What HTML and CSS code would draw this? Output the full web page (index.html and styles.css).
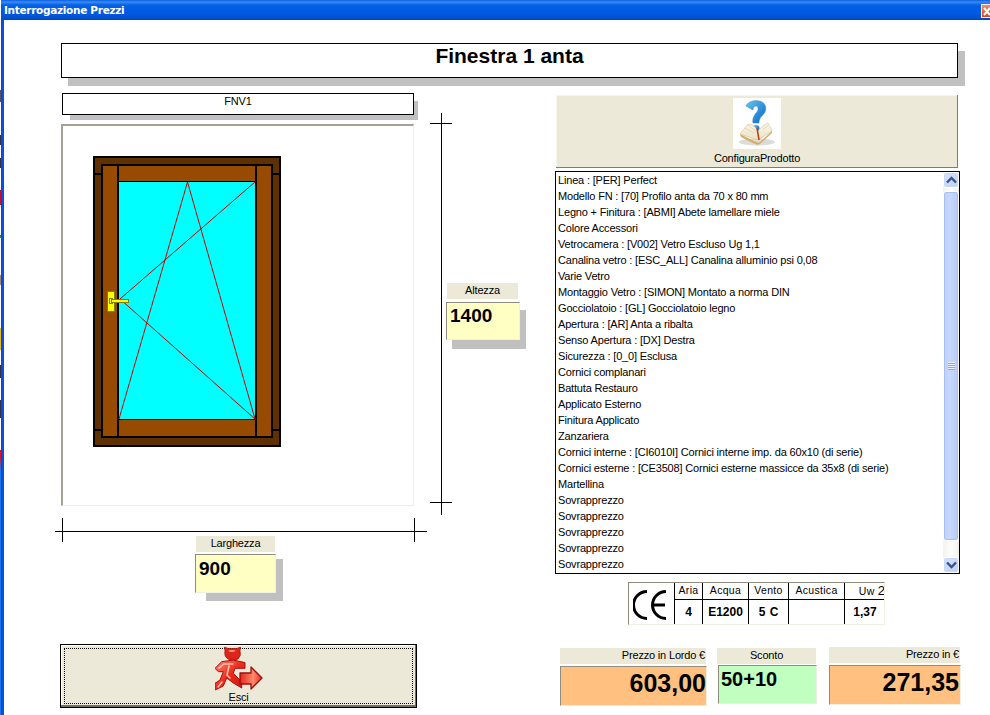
FILE: index.html
```html
<!DOCTYPE html>
<html lang="it">
<head>
<meta charset="utf-8">
<title>Interrogazione Prezzi</title>
<link rel="stylesheet" href="styles.css">
</head>
<body>
<div class="window">
  <header class="titlebar">
    <span class="title-text">Interrogazione Prezzi</span>
    <span class="close-btn"><svg width="8" height="13" viewBox="0 0 8 13"><path d="M2 3l6 7M8 3l-6 7" stroke="#fff" stroke-width="2" fill="none"/></svg></span>
  </header>
  <div class="frame">
    <div class="desktop-strip"></div>
    <div class="win-border"></div>
    <main class="client">
      <h1 class="heading">Finestra 1 anta</h1>
      <div class="columns">
        <section class="left">
          <div class="drawing-row">
            <div class="drawing-col">
              <div class="code-box">FNV1</div>
              <div class="sunken drawing">
                <svg width="350" height="379" viewBox="63 126 350 379" shape-rendering="crispEdges">
                  <rect x="94" y="157" width="186" height="289" fill="#5f3000" stroke="#000" stroke-width="2"/>
                  <path d="M93 174h8M273 174h8M93 430h8M273 430h8" stroke="#000" stroke-width="1.5"/>
                  <rect x="102" y="165" width="170" height="272" fill="#964b00" stroke="#000" stroke-width="2"/>
                  <rect x="118.5" y="181.500" width="137" height="238" fill="#00ffff" stroke="#000" stroke-width="1.500"/>
                  <path d="M118 165v272M256 165v272" stroke="#000" stroke-width="1.500"/>
                  <g class="sash-lines" stroke="#c00000" stroke-width="1" fill="none">
                    <path d="M187.500 182L119 419M187.500 182L255 419"/>
                    <path d="M255 182L120 299L255 419"/>
                  </g>
                  <rect x="107" y="291" width="7" height="20" fill="#ffff00" stroke="#808000"/>
                  <rect x="109" y="298" width="3" height="5" fill="#ffff00" stroke="#808000"/>
                  <rect x="111" y="299" width="17" height="3" fill="#ffff00" stroke="#808000"/>
                </svg>
              </div>
            </div>
            <svg class="dim-v" width="22" height="402" viewBox="0 0 22 402" shape-rendering="crispEdges">
              <path d="M11.500 0V402M0 10.500H22M0 389.500H22" stroke="#000" fill="none"/>
            </svg>
            <div class="field field-h">
              <div class="field-label">Altezza</div>
              <div class="sunken value-box value-yellow">1400</div>
            </div>
          </div>
          <svg class="dim-h" width="372" height="24" viewBox="0 0 372 24" shape-rendering="crispEdges">
            <path d="M0 13.500H372M7.500 0V24M359.500 0V24" stroke="#000" fill="none"/>
          </svg>
          <div class="field field-w">
            <div class="field-label">Larghezza</div>
            <div class="sunken value-box value-yellow">900</div>
          </div>
          <button class="exit-btn" type="button">
            <span class="focus-ring">
              <svg width="48" height="44" viewBox="0 0 48 44">
                <defs>
                  <linearGradient id="red" x1="0" y1="0" x2="1" y2="1">
                    <stop offset="0" stop-color="#ff8a78"/><stop offset=".5" stop-color="#ee2a1a"/><stop offset="1" stop-color="#c2150e"/>
                  </linearGradient>
                  <linearGradient id="arrow" x1="0" y1="0" x2="1" y2="0">
                    <stop offset="0" stop-color="#e82418"/><stop offset=".6" stop-color="#ff8a70"/><stop offset="1" stop-color="#e83020"/>
                  </linearGradient>
                </defs>
                <path d="M10 4L9.500 0 13 1.500h9L25.500 0 25 4a7.500 7.500 0 0 1-2 8q-5 3-10 0a7.500 7.500 0 0 1-3-8z" fill="#dd2418" stroke="#9c0f0c" stroke-width=".7"/>
                <path d="M13 4q4-2 8 0-4 2-8 0z" fill="#ff9c8a"/>
                <path d="M0 21.300L6.700 14.700 18.300 13 30 15.600V21.300H20L18.300 26.300 26.700 34.700V41L18.300 36 11.700 31 8.300 39 0 43V36.300L5 33 8.300 24.700 3.300 24.700z" fill="url(#red)" stroke="#a81210" stroke-linejoin="round"/>
                <path d="M4 21L9 17H18M14 19L12 28 15 31 M3 40L7 35" fill="none" stroke="#ffc0b0" stroke-width="1.600" stroke-linecap="round"/>
                <path d="M25 26H36V20L47 31 36 42V37H25z" fill="url(#arrow)" stroke="#98100c" stroke-width="1.300" stroke-linejoin="round"/>
              </svg>
              <span class="exit-label">Esci</span>
            </span>
          </button>
        </section>
        <section class="right">
          <button class="config-btn" type="button">
            <span class="config-icon">
              <svg width="48" height="51" viewBox="0 0 48 51">
                <defs>
                  <linearGradient id="q" x1="0" y1="0" x2="1" y2="1"><stop offset="0" stop-color="#62c8f6"/><stop offset="1" stop-color="#0a64c0"/></linearGradient>
                  <linearGradient id="pg" x1="0" y1="0" x2="0" y2="1"><stop offset="0" stop-color="#fbf6ea"/><stop offset="1" stop-color="#efe2c4"/></linearGradient>
                </defs>
                <ellipse cx="24" cy="44" rx="18" ry="3.500" fill="#dcdcdc"/>
                <path d="M13 8C15 3 22 2 26 3 32 4 34 9 32 14 30 18 26 19 26 25H20C19 20 22 16 24 14 26 11 25 8 23 8 21 8 20 10 20 12z" fill="url(#q)" stroke="#2a80cc" stroke-width=".5"/>
                <ellipse cx="23" cy="30" rx="3.500" ry="3" fill="url(#q)"/>
                <path d="M7 36L15 26C19 26 23 29 25 33 28 29 31 27 35 25L39 33 25 42z" fill="url(#pg)" stroke="#c8b080" stroke-width=".5"/>
                <path d="M7 36L23 44C25 45 26 45 27 44L39 33V35L27 46C25 47 24 47 22 46L8 39z" fill="#d8ac62"/>
                <path d="M24 30L26 42" stroke="#b8481c" stroke-width="1.600"/>
                <path d="M12 30L21 35M15 27L23 33M30 31L35 28" stroke="#d9c9a6" stroke-width=".6"/>
              </svg>
            </span>
            <span class="config-label">ConfiguraProdotto</span>
          </button>
          <div class="listbox">
            <ul class="list-items">
              <li>Linea : [PER] Perfect</li>
              <li>Modello FN : [70] Profilo anta da 70 x 80 mm</li>
              <li>Legno + Finitura : [ABMI] Abete lamellare miele</li>
              <li>Colore Accessori</li>
              <li>Vetrocamera : [V002] Vetro Escluso Ug 1,1</li>
              <li>Canalina vetro : [ESC_ALL] Canalina alluminio psi 0,08</li>
              <li>Varie Vetro</li>
              <li>Montaggio Vetro : [SIMON] Montato a norma DIN</li>
              <li>Gocciolatoio : [GL] Gocciolatoio legno</li>
              <li>Apertura : [AR] Anta a ribalta</li>
              <li>Senso Apertura : [DX] Destra</li>
              <li>Sicurezza : [0_0] Esclusa</li>
              <li>Cornici complanari</li>
              <li>Battuta Restauro</li>
              <li>Applicato Esterno</li>
              <li>Finitura Applicato</li>
              <li>Zanzariera</li>
              <li>Cornici interne : [CI6010I] Cornici interne imp. da 60x10 (di serie)</li>
              <li>Cornici esterne : [CE3508] Cornici esterne massicce da 35x8 (di serie)</li>
              <li>Martellina</li>
              <li>Sovrapprezzo</li>
              <li>Sovrapprezzo</li>
              <li>Sovrapprezzo</li>
              <li>Sovrapprezzo</li>
              <li>Sovrapprezzo</li>
            </ul>
            <div class="scrollbar">
              <span class="sb-btn"><svg width="11" height="8" viewBox="0 0 11 8"><path d="M1 6.500l4.500-4.500L10 6.500" fill="none" stroke="#3a5488" stroke-width="2.400"/></svg></span>
              <span class="sb-thumb"><span class="sb-grip"></span></span>
              <span class="sb-btn"><svg width="11" height="8" viewBox="0 0 11 8"><path d="M1 1.500l4.500 4.500L10 1.500" fill="none" stroke="#3a5488" stroke-width="2.400"/></svg></span>
            </div>
          </div>
          <div class="sunken cert">
            <div class="ce-mark">
              <svg width="38" height="32" viewBox="0 0 38 32"><path d="M14 2.500a13.500 13.500 0 0 0 0 27M33 2.500a13.500 13.500 0 0 0 0 27M20 16H32" fill="none" stroke="#000" stroke-width="3"/></svg>
            </div>
            <div class="cert-h h-aria">Aria</div>
            <div class="cert-h h-acqua">Acqua</div>
            <div class="cert-h h-vento">Vento</div>
            <div class="cert-h h-acu">Acustica</div>
            <div class="cert-h h-uw">Uw <span class="uw-two">2</span></div>
            <div class="cert-v">4</div>
            <div class="cert-v">E1200</div>
            <div class="cert-v">5 C</div>
            <div class="cert-v"></div>
            <div class="cert-v">1,37</div>
          </div>
          <div class="prices">
            <div class="price price-gross">
              <div class="field-label align-end">Prezzo in Lordo €</div>
              <div class="sunken amount value-orange">603,00</div>
            </div>
            <div class="price price-disc">
              <div class="field-label">Sconto</div>
              <div class="sunken disc value-green">50+10</div>
            </div>
            <div class="price price-net">
              <div class="field-label align-end">Prezzo in €</div>
              <div class="sunken amount value-orange">271,35</div>
            </div>
          </div>
        </section>
      </div>
    </main>
  </div>
</div>
</body>
</html>
```

FILE: styles.css
```css
* { box-sizing: border-box; }
html, body { margin: 0; padding: 0; }
body {
  width: 990px; height: 715px; overflow: hidden; background: #fff;
  font-family: "Liberation Sans", Arial, sans-serif; font-size: 11px; letter-spacing: -.18px; color: #000;
}
.window { width: 990px; height: 715px; display: flex; flex-direction: column; overflow: hidden; }

.titlebar {
  height: 20px; flex: none; margin-left: 1px; display: flex; align-items: flex-start; justify-content: space-between;
  background: linear-gradient(#0a5ee0 0, #3a8cf2 2px, #0461e6 5px, #0058e0 14px, #0050cc 18px, #0046b8 20px);
}
.title-text { padding: 3px 0 0 3px; color: #fff; font-family: "DejaVu Sans", sans-serif; font-size: 10.5px; line-height: 14px; font-weight: bold; letter-spacing: -.3px; }
.close-btn {
  width: 9px; height: 14px; margin-top: 4px; display: block;
  background: linear-gradient(#ea9070, #d4471f); border: 1px solid #f4f4f4; border-right: 0; overflow: hidden;
}
.close-btn svg { display: block; }

.frame { flex: 1; display: flex; min-height: 0; }
.desktop-strip {
  width: 1px; flex: none;
  background: linear-gradient(#fff 0 70px, #555 70px 82px, #fff 82px 115px, #334 115px 125px, #fff 125px 138px, #334 138px 148px, #fff 148px 170px, #c01030 170px 185px, #fff 185px 215px, #18a028 215px 218px, #fff 218px 255px, #a08870 255px 265px, #fff 265px 308px, #e8b820 308px 330px, #fff 330px 345px, #334 345px 358px, #fff 358px 380px, #334 380px 398px, #fff 398px 430px, #e01020 430px 436px, #1e78e8 450px 690px);
}
.win-border { width: 3px; flex: none; background: linear-gradient(90deg, #0a3fd0, #0a55e8 60%, #0a45d8); }
.client { flex: 1; min-width: 0; padding: 23px 0 0 57px; position: relative; isolation: isolate; }

.heading {
  position: relative; width: 897px; height: 35px; margin: 0; border: 1px solid #000; background: #fff;
  font-size: 21px; line-height: 24px; font-weight: bold; letter-spacing: 0; text-align: center;
}
.heading::before { content: ""; position: absolute; z-index: -1; left: 6px; top: 7px; right: -8px; bottom: -9px; background: #c0c0c0; }

.columns { display: flex; margin-top: 15px; margin-left: -6px; }
.left { width: 500px; flex: none; }
.right { width: 406px; flex: none; }

.drawing-row { display: flex; }
.drawing-col { width: 359px; flex: none; padding-left: 6px; }
.code-box {
  position: relative; width: 352px; height: 22px; border: 1px solid #000; background: #fff; margin-left: 1px;
  text-align: center; line-height: 15px;
}
.code-box::before { content: ""; position: absolute; z-index: -1; left: 7px; top: 7px; right: -5px; bottom: -6px; background: #c0c0c0; }
.sunken { border: 1px solid; border-color: #8f8c7c #f1efe2 #f1efe2 #8f8c7c; }
.drawing { width: 353px; height: 382px; margin-top: 9px; background: #fff; border-width: 2px 1px 1px 2px; border-color: #a5a293 #f1efe2 #f1efe2 #a5a293; }
.drawing svg { display: block; }
.sash-lines { shape-rendering: geometricPrecision; }

.dim-v { flex: none; display: block; margin: 20px 0 0 16px; }
.field-h { width: 81px; margin: 190px 0 0 -6px; }
.field-label { height: 16px; background: #ece9d8; text-align: center; line-height: 15px; padding: 0 1px; overflow: hidden; white-space: nowrap; }
.align-end { text-align: right; }
.field-h .field-label { width: 71px; margin-left: 1px; }
.value-box { position: relative; height: 38px; margin-top: 3px; width: 74px; font-size: 19px; font-weight: bold; letter-spacing: 0; line-height: 24px; padding: 1px 0 0 3px; border-width: 1px; }
.value-box::before { content: ""; position: absolute; z-index: -1; left: 5px; top: 7px; right: -7px; bottom: -10px; background: #c0c0c0; }
.value-yellow { background: #ffffc4; }
.value-orange { background: #ffc080; }
.value-green { background: #c0ffc0; }

.dim-h { display: block; margin: 3px 0 0; }
.field-w { width: 81px; margin: -6px 0 0 140px; }
.field-w .field-label { width: 79px; margin-left: 1px; }
.field-w .value-box { width: 81px; height: 39px; margin-top: 2px; padding-top: 2px; }
.field-w .value-box::before { left: 10px; top: 4px; right: -8px; bottom: -9px; }

.exit-btn {
  display: block; width: 357px; height: 64px; margin: 51px 0 0 5px; padding: 3px; background: #ece9d8;
  border: 1px solid #000; box-shadow: inset -1px -2px 0 #716f64, inset 1px 1px 0 #fff; font: inherit; letter-spacing: inherit; color: #000;
}
.focus-ring {
  height: 100%; width: 100%; border: 1px dotted #000; display: flex; flex-direction: column; align-items: center; padding-top: 1px;
}
.focus-ring svg { display: block; margin-top: -3px; }
.exit-label { font-size: 11px; line-height: 12px; }

.config-btn {
  display: flex; flex-direction: column; align-items: center; width: 402px; height: 73px; margin: 2px 0 0 1px; padding: 3px 0 0;
  background: #ece9d8; border: 0; box-shadow: inset -1px -1px 0 #7f7d70, inset 1px 1px 0 #f6f5ee; font: inherit; letter-spacing: inherit; color: #000;
}
.config-icon { width: 48px; height: 51px; background: #fff; display: block; }
.config-icon svg { display: block; }
.config-label { line-height: 14px; margin-top: 2px; }

.listbox { display: flex; width: 405px; height: 403px; margin-top: 3px; border: 1px solid #000; background: #fff; overflow: hidden; }
.list-items { list-style: none; margin: 0; padding: 0 0 0 2px; flex: 1; min-width: 0; }
.list-items li { height: 16px; line-height: 16px; white-space: nowrap; }
.scrollbar { width: 16px; flex: none; display: flex; flex-direction: column; background: linear-gradient(90deg, #f3f2ec, #fdfdfa 50%, #f3f2ec); }
.sb-btn {
  height: 16px; flex: none; display: flex; align-items: center; justify-content: center;
  background: linear-gradient(135deg, #d6e2fc, #bcd0f8); border: 1px solid #fff; border-radius: 3px; box-shadow: inset 0 0 0 1px #c8d8f8;
}
.sb-thumb {
  flex: 1; margin: 3px 0 16px; display: flex; align-items: center; justify-content: center;
  background: linear-gradient(90deg, #bcd0f8, #c8d8fc 40%, #b8ccf8); border: 1px solid #fff; border-radius: 3px; box-shadow: inset 0 0 0 1px #a8c0f0;
}
.sb-grip { width: 7px; height: 8px; background: repeating-linear-gradient(#e8f0ff 0 1px, #8aa8e0 1px 2px); }

.cert {
  display: grid; grid-template-columns: 46px 28px 46px 40px 56px 40px; grid-template-rows: 17px 26px;
  width: 257px; height: 43px; margin: 8px 0 0 73px; background: #fff; overflow: hidden;
}
.ce-mark { grid-row: 1 / span 2; display: flex; align-items: center; justify-content: center; border-right: 1px solid #000; }
.cert-h { border-right: 1px solid #000; border-bottom: 1px solid #000; text-align: center; line-height: 15px; font-size: 10.5px; letter-spacing: .3px; white-space: nowrap; overflow: hidden; }
.h-uw { border-right: 0; text-align: right; }
.uw-two { font-size: 13px; letter-spacing: 0; }
.cert-v { border-right: 1px solid #000; text-align: center; font-weight: bold; font-size: 12px; letter-spacing: 0; line-height: 24px; word-spacing: 1px; }
.cert-v:last-child { border-right: 0; }

.prices { display: flex; align-items: flex-start; margin: 23px 0 0 5px; }
.price-gross { width: 147px; }
.price-disc { width: 100px; margin-left: 10px; }
.price-net { width: 132px; margin-left: 12px; margin-top: -1px; }
.price-gross .field-label { width: 146px; }
.price-disc .field-label { width: 99px; }
.price-net .field-label { width: 131px; }
.amount { height: 40px; margin-top: 2px; text-align: right; font-size: 25px; font-weight: bold; letter-spacing: 0; line-height: 33px; padding-right: 0; border-width: 1px; }
.disc { height: 39px; margin: 1px 0 0 1px; width: 99px; font-size: 20px; font-weight: bold; letter-spacing: 0; line-height: 25px; padding: 1px 0 0 2px; }
.price-net .amount { line-height: 32px; padding-right: 1px; }
```
